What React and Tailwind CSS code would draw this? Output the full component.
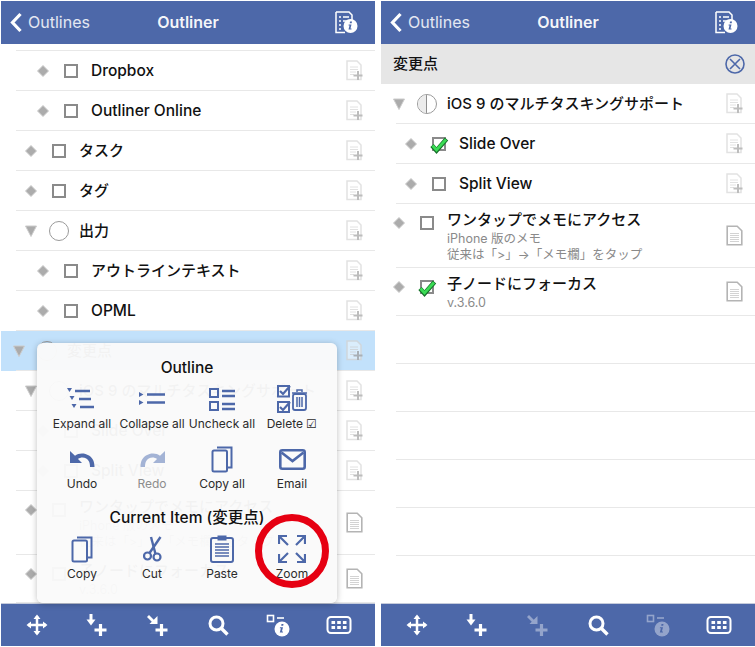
const INDENT = ["pl-[10px]", "pl-[22px]", "pl-[34px]"];
const BLUE = "#4d68a9";

function Triangle() {
  return (
    <svg width="16" height="16" viewBox="0 0 16 16">
      <path d="M2.500 3h11L8 13.500z" fill="#ababab" stroke="#cccccc" strokeWidth="1" />
    </svg>
  );
}

function Diamond() {
  return (
    <svg width="16" height="16" viewBox="0 0 16 16">
      <path d="M8 2.500 13.500 8 8 13.500 2.500 8z" fill="#acacac" stroke="#cccccc" strokeWidth="1" />
    </svg>
  );
}

function Box() {
  return <div className="w-[14px] h-[14px] border-2 border-[#8a8a8a]"></div>;
}

function Checked() {
  return (
    <div className="relative w-[14px] h-[14px] border-2 border-[#8a8a8a]">
      <svg className="absolute left-[-4px] top-[-3px]" width="20" height="18" viewBox="0 0 20 18" fill="none">
        <path d="M2 9.500l4.500 5L16.500 3" stroke="#16702a" strokeWidth="4.500" />
        <path d="M2.500 9.500l4 4.500L16 3.500" stroke="#3bdc55" strokeWidth="2.800" />
      </svg>
    </div>
  );
}

function Circle({ half }) {
  return (
    <div className="relative w-5 h-5 rounded-full border-[1.5px] border-[#9a9a9a] overflow-hidden">
      {half && <div className="absolute left-0 top-0 bottom-0 w-[8.5px] bg-[#ececec] border-r border-[#8f8f8f]"></div>}
    </div>
  );
}

function DocPlus({ dark }) {
  const c = dark ? "#cfd6dc" : "#e2e2e2";
  return (
    <svg width="17" height="21" viewBox="0 0 17 21" fill="none">
      <path d="M1 1h10l4 4v14.500H1z" fill="#fff" fillOpacity={dark ? 0.4 : 1} stroke={c} strokeWidth="1.500" />
      <path d="M4 7h8M4 9.500h8M4 12h6M4 14.500h4" stroke={c} strokeWidth="1" />
      <path d="M12 11v9M7.500 15.500h9" stroke={dark ? "#a9b0b6" : "#bdbdbd"} strokeWidth="2" />
    </svg>
  );
}

function DocNote() {
  return (
    <svg width="17" height="21" viewBox="0 0 17 21" fill="none">
      <path d="M1.200 1.200h10l4.600 4.600v14H1.200z" fill="#fff" stroke="#b4b4b4" strokeWidth="1.600" />
      <path d="M4 8.500h9M4 10.500h9M4 12.500h9M4 14.500h9M4 16.500h9" stroke="#c8c8c8" strokeWidth="0.800" />
    </svg>
  );
}

function Row({ depth = 0, kind = "diamond", check = "box", text, sub, height = "h-10", selected, note, cjk }) {
  return (
    <div className={`${height} flex flex-col ${selected ? "bg-[#c2e1fb]" : ""}`}>
      <div className={`flex-1 min-h-0 flex pr-[12px] ${INDENT[depth]}`}>
        <div className={`${sub ? "h-[38px]" : "h-10"} w-4 flex items-center justify-center shrink-0`}>
          {kind === "triangle" ? <Triangle /> : <Diamond />}
        </div>
        <div className={`${sub ? "h-[38px]" : "h-10"} w-5 ml-[10px] flex items-center justify-center shrink-0`}>
          {check === "box" && <Box />}
          {check === "checked" && <Checked />}
          {check === "circle" && <Circle />}
          {check === "half" && <Circle half />}
        </div>
        <div className={`ml-[10px] flex-1 min-w-0 ${sub ? "pt-[6px]" : "pt-[10px]"}`}>
          <div className={`${cjk ? "text-[15px]" : "text-[15.5px]"} leading-5 font-medium text-[#111] whitespace-nowrap`}>{text}</div>
          {sub && (
            <div className="mt-px">
              {sub.map((line) => (
                <div key={line} className="text-[12.5px] leading-4 text-[#8a8a8a] whitespace-nowrap">{line}</div>
              ))}
            </div>
          )}
        </div>
        <div className="flex items-center shrink-0">
          {note ? <DocNote /> : <DocPlus dark={selected} />}
        </div>
      </div>
      <div className="ml-[15px] h-px bg-[#e8e8e8]"></div>
    </div>
  );
}

function InfoDoc() {
  return (
    <svg width="23" height="23" viewBox="0 0 23 23" fill="none">
      <path d="M1 1h13l3 3v5M1 1v20.500h9" stroke="#fff" strokeWidth="1.500" />
      <path d="M4 6h2M8 6h6M4 10h2M8 10h4M4 14h2M4 18h2" stroke="#fff" strokeWidth="1.600" />
      <circle cx="15.500" cy="15" r="7" fill="#fff" />
      <path d="M15 10.500h2l-.3 1.700h-2zM13.700 13.600h2.800l-1 4h1v1h-3l1-4h-1z" fill={BLUE} />
    </svg>
  );
}

function Header() {
  return (
    <div className="h-[43px] shrink-0 bg-[#4d68a9] grid grid-cols-[1fr_auto_1fr] items-center pb-px text-white text-[16px]">
      <div className="flex items-center pl-2">
        <svg width="14" height="21" viewBox="0 0 14 21" fill="none">
          <path d="M11.500 2 3.500 10.500l8 8.500" stroke="#fff" strokeWidth="3.200" />
        </svg>
        <span className="ml-[5px] text-white/85">Outlines</span>
      </div>
      <div className="font-semibold text-white/95">Outliner</div>
      <div className="flex justify-end pr-[17px]">
        <InfoDoc />
      </div>
    </div>
  );
}

function ToolIcon({ children, w = 24, h = 24, dim }) {
  return (
    <div className={`flex items-center justify-center ${dim ? "opacity-40" : ""}`}>
      <svg width={w} height={h} viewBox={`0 0 ${w} ${h}`} fill="none">{children}</svg>
    </div>
  );
}

function Toolbar({ dimChild }) {
  return (
    <div className="h-[43px] shrink-0 bg-[#4d68a9] border-t border-[#c5cbdb] grid grid-cols-6 items-center px-[6px]">
      <ToolIcon>
        <path d="M12 3v18M3 12h18" stroke="#fff" strokeWidth="2.500" />
        <path d="M12 1.500 15.500 6h-7zM12 22.500 8.500 18h7zM1.500 12 6 8.500v7zM22.500 12 18 15.500v-7z" fill="#fff" />
      </ToolIcon>
      <ToolIcon>
        <path d="M6 1v6" stroke="#fff" strokeWidth="3" />
        <path d="M1.500 6.500h9L6 12.500z" fill="#fff" />
        <path d="M15.500 11v12M9.500 17h12" stroke="#fff" strokeWidth="3.200" />
      </ToolIcon>
      <ToolIcon dim={dimChild}>
        <path d="M2 3l6 6" stroke="#fff" strokeWidth="2.800" />
        <path d="M2 10h8V2z" fill="#fff" transform="translate(1.500 1)" />
        <path d="M15.500 11v12M9.500 17h12" stroke="#fff" strokeWidth="3.200" />
      </ToolIcon>
      <ToolIcon>
        <circle cx="10.500" cy="10.500" r="6.500" stroke="#fff" strokeWidth="3" />
        <path d="M15.500 15.500l6 6" stroke="#fff" strokeWidth="3.400" />
      </ToolIcon>
      <ToolIcon dim={dimChild}>
        <rect x="1.500" y="2.500" width="6" height="6" stroke="#fff" strokeWidth="1.600" />
        <path d="M11 5h7" stroke="#fff" strokeWidth="1.600" />
        <circle cx="16" cy="16" r="7.500" fill="#fff" />
        <path d="M15.500 11h2l-.3 1.800h-2zM14 14.200h3l-1.100 4.300h1.100v1h-3.200l1.100-4.300h-1.100z" fill={BLUE} />
      </ToolIcon>
      <ToolIcon w={26} h={20}>
        <rect x="1.500" y="2" width="23" height="16" rx="3.500" stroke="#fff" strokeWidth="2" />
        <path d="M5.500 6h3.600v3H5.500zM11.200 6h3.600v3h-3.600zM16.900 6h3.600v3h-3.600zM5.500 11h3.600v3H5.500zM11.200 11h3.600v3h-3.600zM16.900 11h3.600v3h-3.600z" fill="#fff" />
      </ToolIcon>
    </div>
  );
}

function MenuItem({ label, grey, children }) {
  return (
    <div className="flex flex-col items-center">
      <div className="h-[34px] flex items-center justify-center">{children}</div>
      <div className={`h-4 text-[12px] leading-4 whitespace-nowrap ${grey ? "text-[#8d8d8d]" : "text-[#2b2b2b]"}`}>{label}</div>
    </div>
  );
}

function CopyIcon({ w = 22, h = 27 }) {
  return (
    <svg width={w} height={h} viewBox="0 0 22 27" fill="none" stroke={BLUE} strokeWidth="2">
      <path d="M6 1.500h14.500v20H16" />
      <rect x="1.500" y="4.500" width="14.500" height="21" rx="1.500" />
    </svg>
  );
}

function Popover() {
  return (
    <div className="absolute left-[36px] top-[342px] w-[300px] h-[260px] z-10 rounded-md bg-[#fafafa]/[0.97] shadow-[0_1px_6px_rgba(0,0,0,0.25)] px-[10px] pt-[15px]">
      <div className="h-5 leading-5 text-center text-[15.5px] font-medium text-[#111]">Outline</div>
      <div className="mt-[4px] grid grid-cols-4 gap-y-[10px]">
        <MenuItem label="Expand all">
          <svg width="30" height="22" viewBox="0 0 30 22" fill={BLUE}>
            <path d="M0 0h5L2.500 4zM2.500 8h5L5 12zM4.500 16h5L7 20z" />
            <path d="M8 3h15M12 11h12M13 19h14" stroke={BLUE} strokeWidth="2.500" />
          </svg>
        </MenuItem>
        <MenuItem label="Collapse all">
          <svg width="27" height="14" viewBox="0 0 27 14" fill={BLUE}>
            <path d="M0 0v5l4.500-2.500zM0 8v5l4.500-2.500z" />
            <path d="M8 2.500h18M8 10.500h18" stroke={BLUE} strokeWidth="2.500" />
          </svg>
        </MenuItem>
        <MenuItem label="Uncheck all">
          <svg width="27" height="23" viewBox="0 0 27 23" fill="none" stroke={BLUE}>
            <rect x="1" y="1" width="8" height="8" strokeWidth="2" />
            <rect x="1" y="14" width="8" height="8" strokeWidth="2" />
            <path d="M13 3h13M13 8h13M13 16h13M13 21h13" strokeWidth="2.400" />
          </svg>
        </MenuItem>
        <MenuItem label="Delete ☑">
          <svg width="31" height="28" viewBox="0 0 31 28" fill="none" stroke={BLUE}>
            <rect x="1" y="1" width="11" height="10.500" strokeWidth="2" />
            <rect x="1" y="17" width="11" height="10" strokeWidth="2" />
            <path d="M3 6l3 3 7-8M3 22l3 3 7-8" strokeWidth="2.200" />
            <rect x="16" y="9" width="13" height="16" rx="2" strokeWidth="1.800" />
            <path d="M15 8h15M20 7V5h5v2M20 12v10M22.500 12v10M25 12v10" strokeWidth="1.500" />
          </svg>
        </MenuItem>
        <MenuItem label="Undo">
          <svg width="25" height="16" viewBox="0 0 25 16" fill={BLUE}>
            <path d="M0 0v12h12L8 8c3-2.500 9-2 11 2.500 .8 1.700 1 3.500 1 5.500h4.500c0-5-1.500-9-5.500-11.500C14 1.500 8.500 2 5 4.800z" />
          </svg>
        </MenuItem>
        <MenuItem label="Redo" grey>
          <svg width="25" height="16" viewBox="0 0 25 16" fill="#a3b3d5">
            <path d="M25 0v12H13l4-4c-3-2.500-9-2-11 2.500-.8 1.700-1 3.500-1 5.500H.5c0-5 1.500-9 5.500-11.500C11 1.500 16.500 2 20 4.800z" />
          </svg>
        </MenuItem>
        <MenuItem label="Copy all"><CopyIcon /></MenuItem>
        <MenuItem label="Email">
          <svg width="27" height="21" viewBox="0 0 27 21" fill="none" stroke={BLUE} strokeWidth="2.600">
            <rect x="1.300" y="1.300" width="24.400" height="18.400" rx="2" />
            <path d="M2.500 3.500 13.500 12l11-8.500" />
          </svg>
        </MenuItem>
      </div>
      <div className="mt-[16px] h-5 leading-5 text-center text-[15.5px] font-medium text-[#111]">Current Item (変更点)</div>
      <div className="mt-[4px] grid grid-cols-4">
        <MenuItem label="Copy"><CopyIcon /></MenuItem>
        <MenuItem label="Cut">
          <svg width="19" height="26" viewBox="0 0 19 26" fill="none" stroke={BLUE}>
            <circle cx="4.500" cy="20" r="3.500" strokeWidth="2.200" />
            <circle cx="14" cy="21" r="3.500" strokeWidth="2.200" />
            <path d="M6.500 17 17.500 1" strokeWidth="2.400" />
            <path d="M12.500 18 8 1" strokeWidth="2.400" />
          </svg>
        </MenuItem>
        <MenuItem label="Paste">
          <svg width="24" height="28" viewBox="0 0 24 28" fill="none" stroke={BLUE}>
            <rect x="1" y="3" width="22" height="24" rx="2" strokeWidth="2" />
            <rect x="8" y="1" width="8" height="4" fill={BLUE} strokeWidth="1" />
            <path d="M5 9h14M5 12h14M5 15h14M5 18h14M5 21h14" strokeWidth="1.600" />
          </svg>
        </MenuItem>
        <MenuItem label="Zoom">
          <svg width="28" height="28" viewBox="0 0 28 28" fill="none" stroke={BLUE} strokeWidth="2.200">
            <path d="M1 9V1h8M1 1l9 9M27 9V1h-8M27 1l-9 9M1 19v8h8M1 27l9-9M27 19v8h-8M27 27l-9-9" />
          </svg>
        </MenuItem>
      </div>
      <div className="absolute left-[218px] top-[171px] w-[74px] h-[74px] rounded-full border-[7px] border-[#e60012]"></div>
    </div>
  );
}

function LeftPanel() {
  return (
    <div className="relative w-[374px] h-[645px] flex flex-col overflow-hidden">
      <Header />
      <div className="flex-1 min-h-0 overflow-hidden">
        <div className="h-[7px] flex flex-col justify-end">
          <div className="ml-[15px] h-px bg-[#e8e8e8]"></div>
        </div>
        <Row depth={2} text="Dropbox" />
        <Row depth={2} text="Outliner Online" />
        <Row depth={1} cjk text="タスク" />
        <Row depth={1} cjk text="タグ" />
        <Row depth={1} cjk kind="triangle" check="circle" text="出力" />
        <Row depth={2} cjk text="アウトラインテキスト" />
        <Row depth={2} text="OPML" />
        <Row depth={0} cjk kind="triangle" check="circle" text="変更点" selected />
        <Row depth={1} cjk kind="triangle" check="circle" text="iOS 9 のマルチタスキングサポート" />
        <Row depth={2} text="Slide Over" />
        <Row depth={2} text="Split View" />
        <Row depth={1} cjk height="h-16" text="ワンタップでメモにアクセス" sub={["iPhone 版のメモ", "従来は「>」→「メモ欄」をタップ"]} note />
        <Row depth={1} cjk height="h-12" text="子ノードにフォーカス" sub={["v.3.6.0"]} note />
      </div>
      <Toolbar />
      <Popover />
    </div>
  );
}

function RightPanel() {
  return (
    <div className="w-[374px] h-[645px] flex flex-col overflow-hidden">
      <Header />
      <div className="flex-1 min-h-0 overflow-hidden">
        <div className="h-10 bg-[#e6e6e6] flex items-center justify-between pl-3 pr-[10px]">
          <span className="text-[15px] font-medium text-[#111]">変更点</span>
          <svg width="20" height="20" viewBox="0 0 20 20" fill="none" stroke={BLUE} strokeWidth="1.600">
            <circle cx="10" cy="10" r="9" />
            <path d="M5 5l10 10M15 5 5 15" />
          </svg>
        </div>
        <Row depth={0} cjk kind="triangle" check="half" text="iOS 9 のマルチタスキングサポート" />
        <Row depth={1} check="checked" text="Slide Over" />
        <Row depth={1} text="Split View" />
        <Row depth={0} cjk height="h-16" text="ワンタップでメモにアクセス" sub={["iPhone 版のメモ", "従来は「>」→「メモ欄」をタップ"]} note />
        <Row depth={0} cjk height="h-12" check="checked" text="子ノードにフォーカス" sub={["v.3.6.0"]} note />
        {[0, 1, 2, 3, 4].map((i) => (
          <div key={i} className="h-12 flex flex-col justify-end">
            <div className="ml-[15px] h-px bg-[#e8e8e8]"></div>
          </div>
        ))}
      </div>
      <Toolbar dimChild />
    </div>
  );
}

export default function App() {
  return (
    <div className="w-[755px] h-[647px] bg-white pl-px pt-px flex gap-[6px] font-['Inter','Noto_Sans_CJK_JP',sans-serif]">
      <LeftPanel />
      <RightPanel />
    </div>
  );
}
